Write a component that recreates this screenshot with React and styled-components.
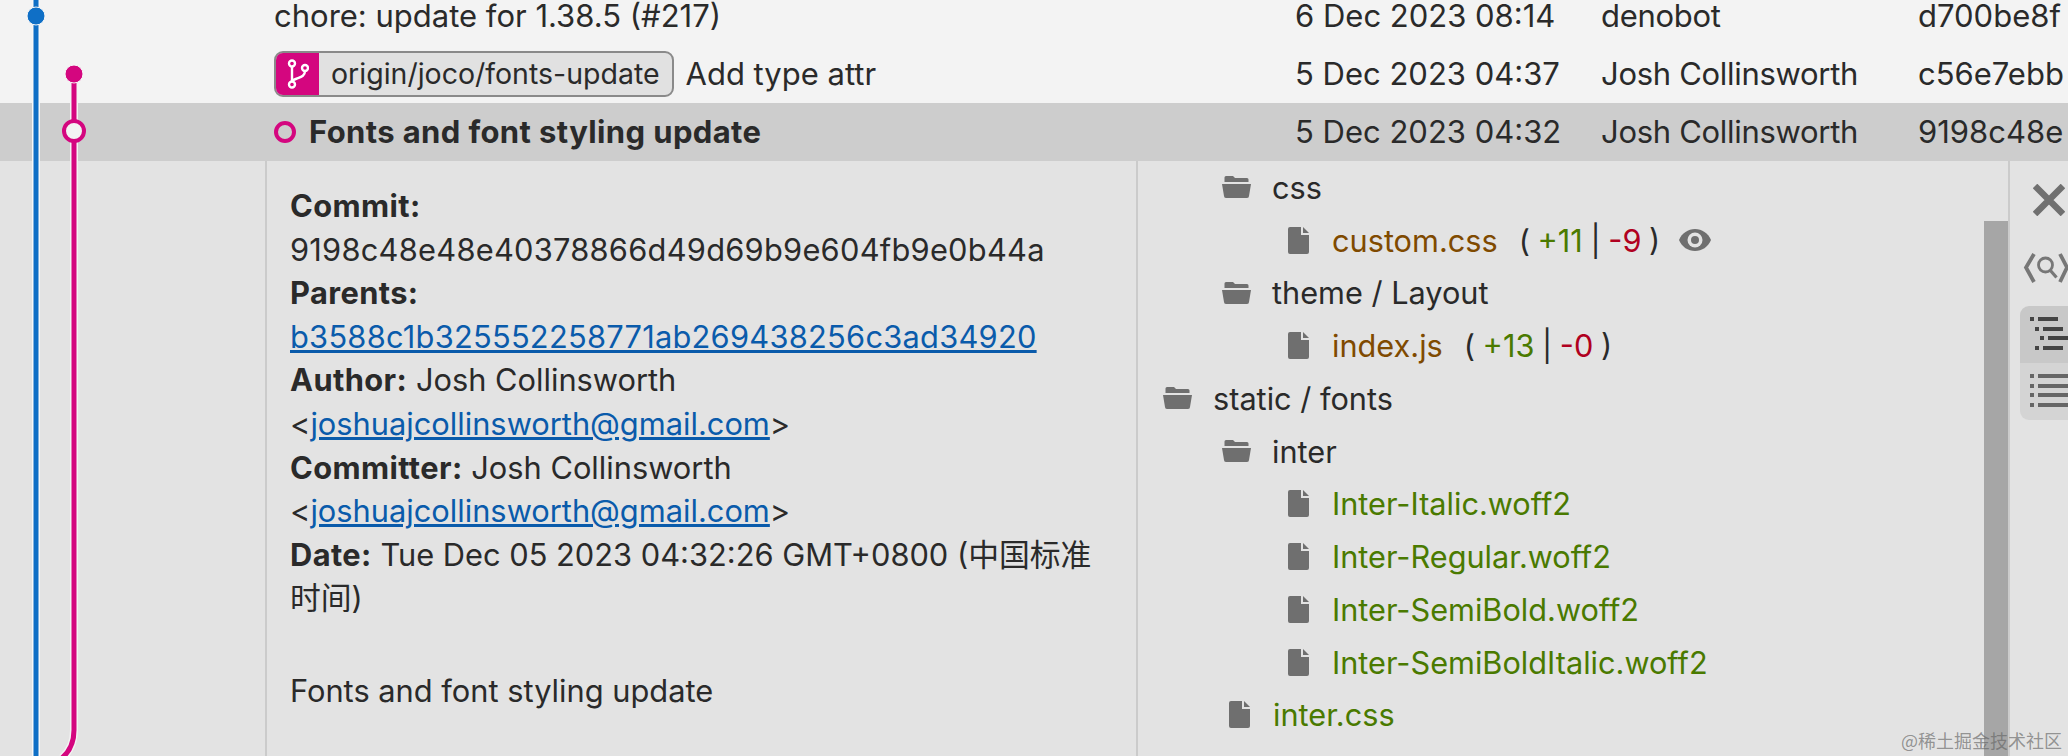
import React from 'react';
import styled, { createGlobalStyle } from 'styled-components';

const GlobalStyle = createGlobalStyle`
  html, body {
    margin: 0;
    padding: 0;
    height: 756px;
    overflow: hidden;
    background: #f3f3f3;
  }
  * { box-sizing: border-box; }
`;

const commits = [
  { id: 1, message: 'chore: update for 1.38.5 (#217)', cut: true, date: '6 Dec 2023 08:14', author: 'denobot', hash: 'd700be8f' },
  { id: 2, message: 'Add type attr', branch: 'origin/joco/fonts-update', date: '5 Dec 2023 04:37', author: 'Josh Collinsworth', hash: 'c56e7ebb' },
  { id: 3, message: 'Fonts and font styling update', selected: true, date: '5 Dec 2023 04:32', author: 'Josh Collinsworth', hash: '9198c48e' },
];

const tree = [
  { id: 1, type: 'folder', level: 1, name: 'css' },
  { id: 2, type: 'file', level: 2, name: 'custom.css', status: 'modified', add: 11, del: 9, eye: true },
  { id: 3, type: 'folder', level: 1, name: 'theme / Layout' },
  { id: 4, type: 'file', level: 2, name: 'index.js', status: 'modified', add: 13, del: 0 },
  { id: 5, type: 'folder', level: 0, name: 'static / fonts' },
  { id: 6, type: 'folder', level: 1, name: 'inter' },
  { id: 7, type: 'file', level: 2, name: 'Inter-Italic.woff2', status: 'added' },
  { id: 8, type: 'file', level: 2, name: 'Inter-Regular.woff2', status: 'added' },
  { id: 9, type: 'file', level: 2, name: 'Inter-SemiBold.woff2', status: 'added' },
  { id: 10, type: 'file', level: 2, name: 'Inter-SemiBoldItalic.woff2', status: 'added' },
  { id: 11, type: 'file', level: 1, name: 'inter.css', status: 'added' },
];

const FolderIcon = () => (
  <svg width="29" height="22" viewBox="0 0 29 22">
    <path d="M4 0h7l2 2h12a1.5 1.5 0 0 1 1.5 1.5V6h-24V1.5A1.5 1.5 0 0 1 4 0z" fill="#6f6f6f" />
    <path d="M0 8h29l-2 12a2 2 0 0 1-2 2H4a2 2 0 0 1-2-2z" fill="#6f6f6f" />
  </svg>
);

const FileIcon = () => (
  <svg width="21" height="27" viewBox="0 0 21 27">
    <path d="M2 0h11v8h8v17a2 2 0 0 1-2 2H2a2 2 0 0 1-2-2V2a2 2 0 0 1 2-2z" fill="#6f6f6f" />
    <path d="M15 0l6 6h-6z" fill="#6f6f6f" />
  </svg>
);

const EyeIcon = () => (
  <svg width="32" height="22" viewBox="0 0 32 22">
    <path d="M16 0C9 0 3 4 0 11c3 7 9 11 16 11s13-4 16-11C29 4 23 0 16 0z" fill="#6f6f6f" />
    <circle cx="16" cy="11" r="7.5" fill="#e3e3e3" />
    <circle cx="16" cy="11" r="4" fill="#6f6f6f" />
  </svg>
);

const BranchIcon = () => (
  <svg width="22" height="30" viewBox="0 0 22 30" fill="none" stroke="#fff" strokeWidth="2.4">
    <circle cx="5" cy="4.5" r="3" />
    <circle cx="18" cy="9" r="3" />
    <circle cx="5" cy="25.5" r="3" />
    <path d="M5 7.5v15M18 12c0 5-4 6-8 7.5-3 1-5 2-5 3" />
  </svg>
);

const SearchCodeIcon = () => (
  <svg width="46" height="30" viewBox="0 0 46 30" fill="none" stroke="#777">
    <path d="M11 1L3 14.5 11 29" strokeWidth="3.8" />
    <circle cx="22.5" cy="12" r="7" strokeWidth="2.8" />
    <path d="M27 17l6.500 7.500" strokeWidth="3.2" />
    <path d="M37 1l7 13.500L37 29" strokeWidth="3.8" />
  </svg>
);

const CloseIcon = () => (
  <svg width="32" height="32" viewBox="0 0 32 32" stroke="#707070" strokeWidth="6.5">
    <path d="M2 2l28 28M30 2L2 30" />
  </svg>
);

const Graph = () => (
  <GraphSvg width="120" height="756" viewBox="0 0 120 756" fill="none">
    <path d="M36 0v756" stroke="#f7f7f7" strokeWidth="8" />
    <path d="M36 0v756" stroke="#0f6fc6" strokeWidth="5" />
    <path d="M74 74v656c0 14-5 22-12 28" stroke="#f3f3f3" strokeWidth="8" />
    <path d="M74 74v656c0 14-5 22-12 28" stroke="#d4067f" strokeWidth="5" />
    <circle cx="36" cy="16" r="9" fill="#0f6fc6" stroke="#f7f7f7" strokeWidth="1" />
    <circle cx="74" cy="74" r="9" fill="#d4067f" stroke="#f7f7f7" strokeWidth="1" />
    <circle cx="74" cy="131" r="10" fill="#f3f3f3" stroke="#d4067f" strokeWidth="4" />
  </GraphSvg>
);

const App = () => {
  return (
    <Page>
      <GlobalStyle />
      <Graph />
      <CommitList>
        {commits.map((commit) => {
          return (
            <CommitRow key={commit.id} selected={commit.selected} cut={commit.cut}>
              <Message>
                {commit.branch && (
                  <BranchTag>
                    <BranchBadge>
                      <BranchIcon />
                    </BranchBadge>
                    <BranchName>{commit.branch}</BranchName>
                  </BranchTag>
                )}
                {commit.selected && <Ring />}
                <MessageText selected={commit.selected}>{commit.message}</MessageText>
              </Message>
              <DateCell>{commit.date}</DateCell>
              <AuthorCell>{commit.author}</AuthorCell>
              <HashCell>{commit.hash}</HashCell>
            </CommitRow>
          );
        })}
      </CommitList>

      <Details>
        <Gutter />
        <Summary>
          <Line><b>Commit:</b></Line>
          <Line hash>9198c48e48e40378866d49d69b9e604fb9e0b44a</Line>
          <Line><b>Parents:</b></Line>
          <Line hash><Link>b3588c1b325552258771ab269438256c3ad34920</Link></Line>
          <Line><b>Author:</b> Josh Collinsworth</Line>
          <Line>&lt;<Link>joshuajcollinsworth@gmail.com</Link>&gt;</Line>
          <Line><b>Committer:</b> Josh Collinsworth</Line>
          <Line>&lt;<Link>joshuajcollinsworth@gmail.com</Link>&gt;</Line>
          <Line><b>Date:</b> Tue Dec 05 2023 04:32:26 GMT+0800 (中国标准</Line>
          <Line>时间)</Line>
          <Body>Fonts and font styling update</Body>
        </Summary>

        <FilePanel>
          <FileTree>
            {tree.map((item) => {
              return (
                <TreeRow key={item.id} level={item.level}>
                  <TreeIcon file={item.type === 'file'}>
                    {item.type === 'folder' ? <FolderIcon /> : <FileIcon />}
                  </TreeIcon>
                  <TreeName status={item.status}>{item.name}</TreeName>
                  {item.add !== undefined && (
                    <Stats>
                      ( <Add>+{item.add}</Add> | <Del>-{item.del}</Del> )
                    </Stats>
                  )}
                  {item.eye && (
                    <EyeBox>
                      <EyeIcon />
                    </EyeBox>
                  )}
                </TreeRow>
              );
            })}
          </FileTree>
          <Scrollbar />
        </FilePanel>

        <SideBar>
          <SideButton>
            <CloseIcon />
          </SideButton>
          <SideButton margin="37px 0 0 3px">
            <SearchCodeIcon />
          </SideButton>
          <ViewSwitch>
            <ViewOption active>
              {[0, 5, 10, 5].map((indent, i) => (
                <ListLine key={i} indent={indent}>
                  <Dot dark />
                  <Bar dark />
                </ListLine>
              ))}
            </ViewOption>
            <ViewOption>
              {[0, 1, 2, 3].map((i) => (
                <ListLine key={i} indent={0}>
                  <Dot />
                  <Bar />
                </ListLine>
              ))}
            </ViewOption>
          </ViewSwitch>
        </SideBar>
      </Details>
      <Watermark>@稀土掘金技术社区</Watermark>
    </Page>
  );
};

const FONT = `Inter, "Noto Sans CJK SC", sans-serif`;

const Page = styled.div`
  position: relative;
  width: 2068px;
  height: 756px;
  overflow: hidden;
  display: flex;
  flex-direction: column;
  font-family: ${FONT};
  font-size: 31px;
  color: #2a2a2a;
`;

const GraphSvg = styled.svg`
  position: absolute;
  top: 0;
  left: 0;
  z-index: 2;
`;

const CommitList = styled.div`
  flex: none;
`;

const CommitRow = styled.div`
  display: flex;
  align-items: center;
  height: ${(props) => (props.selected ? '58px' : props.cut ? '45.5px' : '57.5px')};
  padding: 0 0 ${(props) => (props.cut ? '14.5px' : '1px')} 274px;
  background: ${(props) => (props.selected ? '#cdcdcd' : '#f3f3f3')};
  white-space: nowrap;
  line-height: 30px;
`;

const Message = styled.div`
  display: flex;
  align-items: center;
  width: 1021px;
`;

const MessageText = styled.span`
  font-weight: ${(props) => (props.selected ? 700 : 400)};
  letter-spacing: ${(props) => (props.selected ? '0.38px' : '0')};
`;

const Ring = styled.span`
  width: 22px;
  height: 22px;
  margin-right: 13px;
  border: 4px solid #d4067f;
  border-radius: 50%;
`;

const BranchTag = styled.span`
  display: flex;
  align-items: stretch;
  height: 46px;
  margin-right: 12px;
  border: 2px solid #8a8a8a;
  border-radius: 9px;
  overflow: hidden;
  background: #e1e1e1;
`;

const BranchBadge = styled.span`
  display: flex;
  align-items: center;
  justify-content: center;
  width: 43px;
  background: #d4067f;
`;

const BranchName = styled.span`
  display: flex;
  align-items: center;
  padding: 0 12px 0 12px;
  font-size: 28.5px;
`;

const DateCell = styled.div`
  width: 306px;
`;

const AuthorCell = styled.div`
  width: 317px;
  letter-spacing: -0.3px;
`;

const HashCell = styled.div`
  flex: 1;
  overflow: hidden;
`;

const Details = styled.div`
  flex: 1;
  display: flex;
  min-height: 0;
  background: #e3e3e3;
`;

const Gutter = styled.div`
  width: 265px;
  flex: none;
`;

const Summary = styled.div`
  width: 873px;
  flex: none;
  padding: 23px 24px 0 23px;
  border-left: 2px solid #cbcbcb;
  border-right: 2px solid #cbcbcb;
  font-size: 30.8px;
  line-height: 43.6px;
`;

const Line = styled.div`
  white-space: nowrap;
  letter-spacing: ${(props) => (props.hash ? '0.25px' : '0')};
  b {
    font-weight: 700;
    letter-spacing: 0.4px;
  }
`;

const Link = styled.span`
  color: #0a5bab;
  text-decoration: underline;
`;

const Body = styled.div`
  margin-top: 49px;
`;

const FilePanel = styled.div`
  flex: 1;
  display: flex;
  min-width: 0;
`;

const FileTree = styled.div`
  flex: 1;
  font-size: 30.7px;
`;

const TreeRow = styled.div`
  display: flex;
  align-items: center;
  height: 52.75px;
  padding-left: ${(props) => 25 + props.level * 59}px;
  white-space: nowrap;
`;

const TreeIcon = styled.span`
  display: flex;
  align-items: center;
  width: ${(props) => (props.file ? '51px' : '50px')};
  padding-left: ${(props) => (props.file ? '7px' : '0')};
`;

const TreeName = styled.span`
  color: ${(props) =>
    props.status === 'added' ? '#4a7a00' : props.status === 'modified' ? '#7f4a00' : '#2a2a2a'};
`;

const Stats = styled.span`
  margin-left: 21px;
  word-spacing: -1px;
`;

const Add = styled.span`
  color: #4a7a00;
`;

const Del = styled.span`
  color: #b00020;
`;

const EyeBox = styled.span`
  display: flex;
  margin-left: 19px;
`;

const Scrollbar = styled.div`
  width: 24px;
  flex: none;
  margin-top: 60px;
  background: #a6a6a6;
`;

const SideBar = styled.div`
  width: 60px;
  flex: none;
  padding: 23px 0 0 10px;
  border-left: 2px solid #cbcbcb;
  overflow: hidden;
`;

const SideButton = styled.div`
  display: flex;
  width: 48px;
  margin: ${(props) => props.margin || '0 0 0 13px'};
  overflow: visible;
`;

const ViewSwitch = styled.div`
  width: 48px;
  margin-top: 23px;
  border-radius: 9px 0 0 9px;
  overflow: hidden;
`;

const ViewOption = styled.div`
  display: flex;
  flex-direction: column;
  gap: 5.7px;
  height: 57px;
  padding: 11px 0 0 10px;
  background: ${(props) => (props.active ? '#c8c8c8' : '#d4d4d4')};
`;

const ListLine = styled.div`
  display: flex;
  align-items: center;
  gap: 4px;
  margin-left: ${(props) => props.indent}px;
`;

const Dot = styled.span`
  width: 4px;
  height: 4px;
  flex: none;
  background: ${(props) => (props.dark ? '#444' : '#666')};
`;

const Bar = styled.span`
  width: ${(props) => (props.dark ? '20px' : '40px')};
  height: 4px;
  flex: none;
  background: ${(props) => (props.dark ? '#444' : '#666')};
`;

const Watermark = styled.div`
  position: absolute;
  right: 6px;
  bottom: 5px;
  z-index: 3;
  font-family: "Noto Sans CJK SC", sans-serif;
  font-size: 18px;
  line-height: 22px;
  color: rgba(100, 100, 100, 0.65);
`;

export default App;
